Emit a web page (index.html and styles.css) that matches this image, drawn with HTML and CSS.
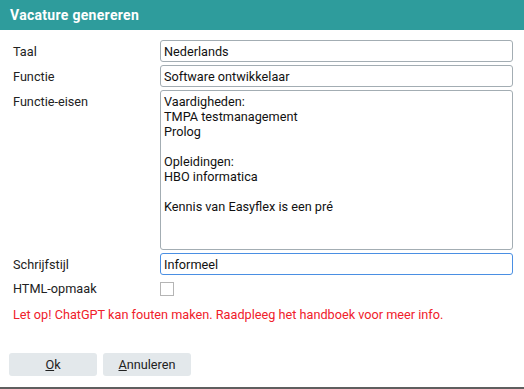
FILE: index.html
```html
<!DOCTYPE html>
<html lang="nl">
<head>
    <meta charset="UTF-8">
    <meta name="viewport" content="width=device-width, initial-scale=1.0">
    <title>Vacature genereren</title>
    <link rel="stylesheet" href="styles.css">
</head>
<body>
    <div class="dialog">
        <div class="titlebar">Vacature genereren</div>
        <div class="content">
            <div class="form">
                <label class="label">Taal</label>
                <input class="field" type="text" value="Nederlands">

                <label class="label">Functie</label>
                <input class="field" type="text" value="Software ontwikkelaar">

                <label class="label">Functie-eisen</label>
                <textarea class="field area">Vaardigheden:
TMPA testmanagement
Prolog

Opleidingen:
HBO informatica

Kennis van Easyflex is een pré</textarea>

                <label class="label">Schrijfstijl</label>
                <input class="field focused" type="text" value="Informeel">

                <label class="label check-label">HTML-opmaak</label>
                <div class="check-cell"><input class="check" type="checkbox"></div>
            </div>
            <p class="warning">Let op! ChatGPT kan fouten maken. Raadpleeg het handboek voor meer info.</p>
            <div class="buttons">
                <button class="btn"><u>O</u>k</button>
                <button class="btn"><u>A</u>nnuleren</button>
            </div>
        </div>
    </div>
</body>
</html>
```

FILE: styles.css
```css
body {
    margin: 0;
    padding: 0;
    font-family: Roboto, "Liberation Sans", Arial, sans-serif;
    font-size: 12.7px;
    color: #222;
    background: #fff;
}

.dialog {
    height: 387px;
    border-bottom: 2px solid #5f5f5f;
    background: white;
}

.titlebar {
    height: 30px;
    line-height: 30px;
    padding-left: 10px;
    background-color: #2e9c9c;
    color: white;
    font-weight: bold;
    font-size: 14px;
    letter-spacing: 0.3px;
}

.content {
    padding: 10px 11px 0 13px;
}

.form {
    display: grid;
    grid-template-columns: 147px 1fr;
    row-gap: 3px;
    align-items: start;
}

.label {
    line-height: 15px;
    padding-top: 4px;
}

.field {
    box-sizing: border-box;
    height: 22px;
    width: 100%;
    margin: 0;
    padding: 0 3px;
    border: 1px solid #a3adb3;
    border-radius: 3px;
    font-family: inherit;
    font-size: 12.7px;
    color: #111;
    outline: none;
}

.area {
    height: 160px;
    padding: 3px 3px;
    line-height: 15px;
    resize: none;
    overflow: hidden;
}

.focused {
    border-color: #4a8fe3;
}

.check-label {
    padding-top: 3px;
}

.check-cell {
    margin-top: 4px;
}

.check {
    appearance: none;
    display: block;
    width: 14px;
    height: 14px;
    margin: 0;
    border: 1px solid #b5b5b5;
    background: white;
}

.warning {
    margin: 11px 0 0;
    line-height: 15px;
    color: #f0202a;
}

.buttons {
    display: flex;
    gap: 6px;
    margin-top: 31px;
    margin-left: -4px;
}

.btn {
    width: 88px;
    height: 23px;
    border: none;
    border-radius: 3px;
    background-color: #e3e8eb;
    font-family: inherit;
    font-size: 12.7px;
    color: #222;
    padding: 0;
}
```
